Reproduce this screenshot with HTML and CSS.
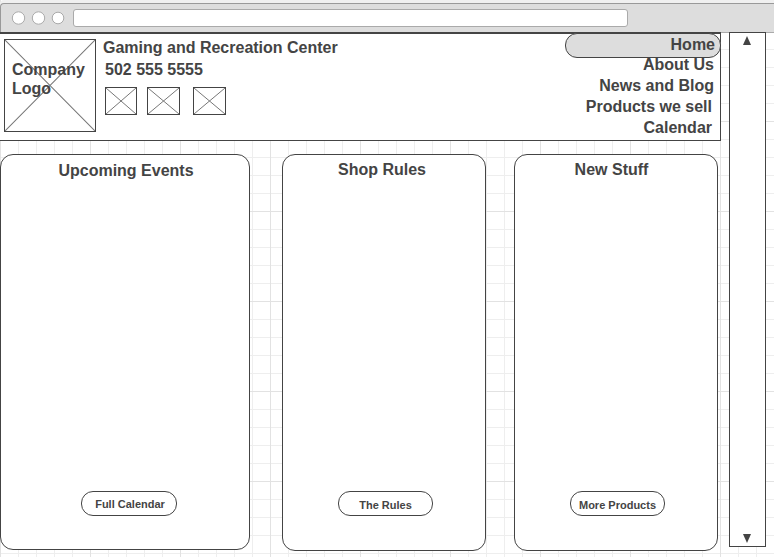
FILE: index.html
```html
<!DOCTYPE html>
<html lang="en">
<head>
<meta charset="utf-8">
<meta name="viewport" content="width=device-width, initial-scale=1">
<title>Gaming and Recreation Center</title>
<link rel="stylesheet" href="styles.css">
</head>
<body>
<div class="chrome">
  <svg class="dots" width="55" height="16" viewBox="0 0 55 16" aria-hidden="true">
    <g fill="#fff" stroke="#aaa">
      <circle cx="7.5" cy="8" r="6.2"/><circle cx="27.5" cy="8" r="6.2"/><circle cx="47" cy="8" r="5.8"/>
    </g>
  </svg>
  <input class="address" type="text" aria-label="Address">
</div>
<div class="window">
  <div class="page">
    <header class="header">
      <div class="logo">
        <svg class="cross" viewBox="0 0 100 100" preserveAspectRatio="none" aria-hidden="true"><path d="M0 0L100 100M100 0L0 100"/></svg>
        <span class="logo-text">Company Logo</span>
      </div>
      <div class="about">
        <h1 class="name">Gaming and Recreation Center</h1>
        <p class="phone">502 555 5555</p>
        <div class="thumbs">
          <svg class="thumb" viewBox="0 0 100 100" preserveAspectRatio="none" aria-hidden="true"><path d="M0 0L100 100M100 0L0 100"/></svg>
          <svg class="thumb" viewBox="0 0 100 100" preserveAspectRatio="none" aria-hidden="true"><path d="M0 0L100 100M100 0L0 100"/></svg>
          <svg class="thumb" viewBox="0 0 100 100" preserveAspectRatio="none" aria-hidden="true"><path d="M0 0L100 100M100 0L0 100"/></svg>
        </div>
      </div>
      <nav class="nav">
        <a class="link current" href="#home">Home</a>
        <a class="link" href="#about">About Us</a>
        <a class="link" href="#news">News and Blog</a>
        <a class="link inset" href="#products">Products we sell</a>
        <a class="link inset" href="#calendar">Calendar</a>
      </nav>
    </header>
    <main class="cards">
      <section class="card events">
        <h2 class="title">Upcoming Events</h2>
        <button class="more" type="button">Full Calendar</button>
      </section>
      <section class="card rules">
        <h2 class="title">Shop Rules</h2>
        <button class="more" type="button">The Rules</button>
      </section>
      <section class="card stuff">
        <h2 class="title">New Stuff</h2>
        <button class="more" type="button">More Products</button>
      </section>
    </main>
  </div>
  <div class="scrollbar">
    <button class="arrow" type="button" aria-label="Scroll up"><svg width="8" height="9" viewBox="0 0 8 9"><path d="M4 0L8 9H0Z"/></svg></button>
    <button class="arrow" type="button" aria-label="Scroll down"><svg width="8" height="9" viewBox="0 0 8 9"><path d="M0 0H8L4 9Z"/></svg></button>
  </div>
</div>
</body>
</html>
```
FILE: styles.css
```css
* {
  box-sizing: border-box;
}

body {
  margin: 0;
  min-height: 100vh;
  font-family: "Liberation Sans", Arial, sans-serif;
  font-size: 16px;
  font-weight: bold;
  color: #444;
  background-color: #fff;
  background-image:
    linear-gradient(90deg, #e2e2e2 1px, transparent 1px),
    linear-gradient(#e2e2e2 1px, transparent 1px),
    linear-gradient(90deg, #eee 1px, transparent 1px),
    linear-gradient(#eee 1px, transparent 1px);
  background-size: 90px 90px, 90px 90px, 18px 18px, 18px 18px;
  background-position: 0 31px;
}

h1, h2, p {
  margin: 0;
  font-size: 16px;
  font-weight: bold;
}

/* Browser frame */
.chrome {
  display: flex;
  align-items: center;
  gap: 7px;
  height: 30px;
  margin-top: 3px;
  padding: 0 146px 0 10px;
  border: 1px solid #999;
  border-right: 0;
  border-bottom-color: #aaa;
  border-radius: 4px 0 0 0;
  background: #ddd;
  box-shadow: 0 -3px 0 #f0f0f0;
}

.dots {
  flex: none;
}

.address {
  flex: 1;
  min-width: 0;
  height: 18px;
  padding: 0 4px;
  border: 1px solid #aaa;
  border-radius: 3px;
  background: #fff;
}

.window {
  display: flex;
  gap: 8px;
  margin-top: -1px;
  padding-right: 8px;
}

.page {
  flex: 1;
  min-width: 0;
}

/* Header */
.header {
  display: flex;
  align-items: flex-start;
  min-height: 109px;
  padding-left: 4px;
  border: 1px solid #444;
  border-width: 2px 1px 1px 0;
  background: #fff;
}

.logo {
  position: relative;
  width: 92px;
  height: 93px;
  margin-top: 5px;
  padding: 20px 7px;
  border: 1px solid #444;
  line-height: 19px;
}

.cross {
  position: absolute;
  inset: 0;
  width: 100%;
  height: 100%;
}

.logo-text {
  position: relative;
}

.cross path,
.thumb path {
  fill: none;
  stroke: #777;
  stroke-width: 1px;
  vector-effect: non-scaling-stroke;
}

.about {
  padding: 3px 0 0 7px;
  line-height: 22px;
}

.phone {
  padding-left: 2px;
}

.thumbs {
  display: flex;
  gap: 10px;
  padding: 6px 0 0 2px;
}

.thumb {
  width: 33px;
  height: 28px;
  border: 1px solid #444;
}

.thumb:first-child {
  width: 32px;
}

.thumb:last-child {
  margin-left: 3px;
}

.nav {
  display: flex;
  flex-direction: column;
  width: 156px;
  margin: -1px -1px 0 auto;
}

.link {
  padding-right: 7px;
  line-height: 21px;
  text-align: right;
  color: inherit;
  text-decoration: none;
}

.inset {
  padding-right: 9px;
}

.current {
  height: 25px;
  margin-bottom: -4px;
  padding-right: 5px;
  border: 1px solid #444;
  border-radius: 12px;
  background: #ddd;
}

/* Content columns */
.cards {
  display: grid;
  grid-template-columns: 250fr 32fr 204fr 28fr 204fr 3fr;
  align-items: start;
  margin-top: 13px;
}

.card {
  display: flex;
  flex-direction: column;
  align-items: center;
  justify-content: space-between;
  min-height: 397px;
  padding: 6px 0 34px;
  border: 1px solid #444;
  border-radius: 13px;
  background: #fff;
}

.events {
  min-height: 396px;
  padding: 7px 0 33px 2px;
}

.rules {
  grid-column: 3;
}

.stuff {
  grid-column: 5;
}

.title {
  line-height: 18px;
}

.rules .title {
  padding-right: 4px;
}

.stuff .title {
  padding-right: 9px;
}

.more {
  width: 95px;
  height: 25px;
  margin-left: 3px;
  padding: 2px 0 0;
  border: 1px solid #444;
  border-radius: 12px;
  background: #fff;
  color: inherit;
  font-family: inherit;
  font-size: 11px;
  font-weight: bold;
}

.events .more {
  width: 96px;
  margin-left: 6px;
  padding: 1px 0 0 2px;
}

/* Scrollbar */
.scrollbar {
  display: flex;
  flex-direction: column;
  align-items: center;
  justify-content: space-between;
  align-self: flex-start;
  width: 37px;
  height: 515px;
  padding: 3px 2px 3px 0;
  border: 1px solid #444;
  background: #fff;
}

.arrow {
  display: flex;
  padding: 0;
  border: 0;
  background: none;
}

.arrow path {
  fill: #444;
}
```
